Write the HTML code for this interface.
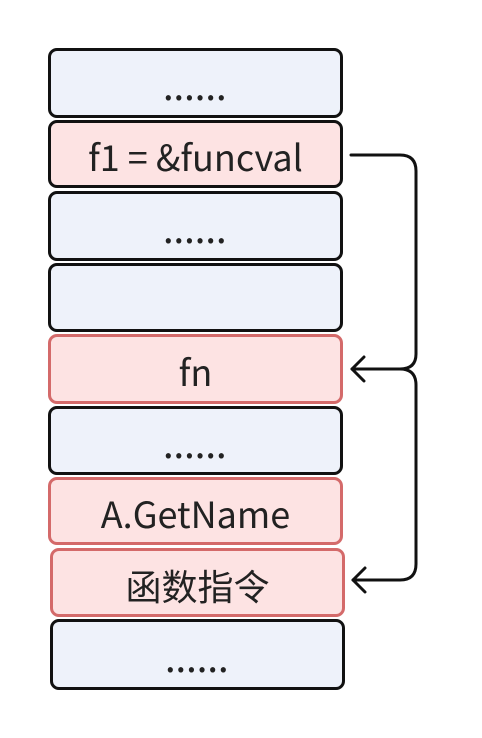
<!DOCTYPE html>
<html><head><meta charset="utf-8"><style>
body{margin:0;width:482px;height:738px;background:#fff;position:relative;overflow:hidden;font-family:"Noto Sans CJK SC","Liberation Sans",sans-serif;}
.b{position:absolute;box-sizing:border-box;border:3.5px solid #111;border-radius:9px;background:#eef2fa;display:flex;align-items:center;justify-content:center;font-size:36px;color:#222;padding-top:4px;}
.r{border-color:#d46a6a;background:#fde3e3;}
.d{font-size:28px;letter-spacing:1.5px;padding-top:12px;font-weight:bold;}
</style></head><body>
<div class="b d" style="left:48px;top:48px;width:295px;height:70px">......</div>
<div class="b r" style="left:48px;top:120px;width:295px;height:68px;border-color:#111">f1 = &amp;funcval</div>
<div class="b d" style="left:48px;top:191px;width:295px;height:70px">......</div>
<div class="b" style="left:48px;top:263px;width:295px;height:69px"></div>
<div class="b r" style="left:48px;top:334px;width:295px;height:70px">fn</div>
<div class="b d" style="left:48px;top:406px;width:295px;height:69px">......</div>
<div class="b r" style="left:48px;top:477px;width:295px;height:68px">A.GetName</div>
<div class="b r" style="left:50px;top:548px;width:295px;height:69px">函数指令</div>
<div class="b d" style="left:50px;top:619px;width:295px;height:71px">......</div>
<svg width="482" height="738" style="position:absolute;left:0;top:0" fill="none" stroke="#111" stroke-width="3" stroke-linecap="round" stroke-linejoin="round">
<path d="M351 155 H400 Q416 155 416 171 V354 Q416 369 400 369 H352"/>
<path d="M364 357 L352 369 L364 381"/>
<path d="M400 369 Q416 369 416 385 V564 Q416 580 400 580 H353"/>
<path d="M365 568 L353 580 L365 592"/>
</svg>
</body></html>
